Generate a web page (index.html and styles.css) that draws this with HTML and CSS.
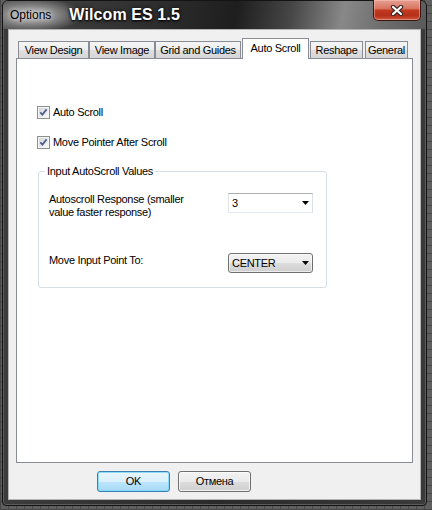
FILE: index.html
```html
<!DOCTYPE html>
<html lang="en">
<head>
<meta charset="utf-8">
<title>Options</title>
<link rel="stylesheet" href="styles.css">
</head>
<body>
<div class="window">
  <div class="titlebar">
    <span class="caption">Options</span>
    <span class="brand">Wilcom ES 1.5</span>
    <button class="close-btn" type="button" aria-label="Close">
      <svg width="14" height="11" viewBox="0 0 14 11">
        <path d="M3 2 L11 9 M11 2 L3 9" stroke="#3a2a28" stroke-width="4.4" stroke-linecap="round" fill="none"/>
        <path d="M3 2 L11 9 M11 2 L3 9" stroke="#ffffff" stroke-width="2.2" stroke-linecap="round" fill="none"/>
      </svg>
    </button>
  </div>

  <div class="client">
    <div class="tab-control">
      <div class="tab-strip">
        <div class="tab tab-design">View Design</div>
        <div class="tab tab-image">View Image</div>
        <div class="tab tab-grid">Grid and Guides</div>
        <div class="tab tab-scroll is-selected">Auto Scroll</div>
        <div class="tab tab-reshape">Reshape</div>
        <div class="tab tab-general">General</div>
      </div>

      <div class="tab-page">
        <label class="check">
          <svg class="check-box" width="13" height="13" viewBox="0 0 13 13">
            <defs>
              <linearGradient id="boxFill" x1="0" y1="0" x2="1" y2="1">
                <stop offset="0" stop-color="#d6d7d9"/>
                <stop offset="1" stop-color="#f7f7f7"/>
              </linearGradient>
            </defs>
            <rect x="0.5" y="0.5" width="12" height="12" fill="#f5f5f5" stroke="#8e8f8f"/>
            <rect x="2" y="2" width="9" height="9" fill="url(#boxFill)"/>
            <path d="M3.3 6.4 L5.4 8.6 L9.6 3.4" stroke="#4a5f8f" stroke-width="1.7" fill="none"/>
          </svg>
          <span>Auto Scroll</span>
        </label>
        <label class="check">
          <svg class="check-box" width="13" height="13" viewBox="0 0 13 13">
            <rect x="0.5" y="0.5" width="12" height="12" fill="#f5f5f5" stroke="#8e8f8f"/>
            <rect x="2" y="2" width="9" height="9" fill="url(#boxFill)"/>
            <path d="M3.3 6.4 L5.4 8.6 L9.6 3.4" stroke="#4a5f8f" stroke-width="1.7" fill="none"/>
          </svg>
          <span>Move Pointer After Scroll</span>
        </label>

        <fieldset class="group">
          <legend>Input AutoScroll Values</legend>
          <div class="group-body">
            <span class="field-label">Autoscroll Response (smaller value faster response)</span>
            <div class="combo combo-edit">
              <span>3</span>
              <svg width="7" height="4" viewBox="0 0 7 4"><path d="M0 0 H7 L3.5 4 Z" fill="#000"/></svg>
            </div>

            <span class="field-label field-label-single">Move Input Point To:</span>
            <div class="combo combo-list">
              <span>CENTER</span>
              <svg width="7" height="4" viewBox="0 0 7 4"><path d="M0 0 H7 L3.5 4 Z" fill="#000"/></svg>
            </div>
          </div>
        </fieldset>
      </div>
    </div>

    <div class="dialog-buttons">
      <button class="btn btn-default" type="button">OK</button>
      <button class="btn" type="button">Отмена</button>
    </div>
  </div>
</div>
</body>
</html>
```

FILE: styles.css
```css
* {
  box-sizing: border-box;
}

html,
body {
  margin: 0;
  height: 510px;
  overflow: hidden;
}

/* desktop behind the dialog: dark gray with a faint grid */
body {
  padding-left: 2px;
  background-color: #5f5f5f;
  background-image:
    repeating-linear-gradient(0deg, #474747 0 1px, transparent 1px 8px),
    repeating-linear-gradient(90deg, #474747 0 1px, transparent 1px 8px);
  font-family: "Liberation Sans", Arial, sans-serif;
  font-size: 11px;
  line-height: 13px;
  letter-spacing: -0.3px;
  color: #000;
}

/* dark glass window frame */
.window {
  width: 425px;
  height: 506px;
  border: 1px solid #141414;
  border-radius: 6px 6px 4px 4px;
  background: linear-gradient(90deg, #3c3c3c, #2a2a2a 50%, #3a3a3a);
  box-shadow: inset 0 0 0 1px #5c5c5c;
  display: flex;
  flex-direction: column;
}

.titlebar {
  flex: none;
  height: 28px;
  display: flex;
  align-items: flex-start;
  padding-left: 7px;
  border-radius: 5px 5px 0 0;
  background:
    radial-gradient(ellipse 50px 17px at 30px 14px, rgba(200, 200, 200, 0.95), rgba(150, 150, 150, 0.55) 65%, rgba(150, 150, 150, 0) 100%),
    linear-gradient(100deg, #5a5a5a 0%, #3a3a3a 18%, #2b2b2b 40%, #1e1e1e 55%, #474747 68%, #888888 80%, #6c6c6c 90%, #5a5a5a 100%);
}

.caption {
  margin-top: 7px;
  font-size: 12px;
  line-height: 14px;
  letter-spacing: 0;
  color: #000;
  text-shadow: 0 0 5px #e6e6e6, 0 0 9px #cfcfcf;
}

.brand {
  margin-left: 18px;
  margin-top: 5px;
  font-size: 16px;
  line-height: 18px;
  font-weight: bold;
  letter-spacing: 0.1px;
  color: #fff;
  text-shadow: 0 1px 2px #000, 0 0 4px rgba(0, 0, 0, 0.8);
}

.close-btn {
  margin-left: auto;
  margin-right: 5px;
  margin-top: -1px;
  width: 48px;
  height: 21px;
  padding: 0;
  border: 1px solid #3b1510;
  border-top: none;
  border-radius: 0 0 5px 5px;
  background: linear-gradient(#e6a193 0%, #d87561 42%, #c2391f 52%, #b5301a 78%, #d0583d 100%);
  box-shadow: inset 0 0 0 1px rgba(255, 205, 195, 0.45);
  display: flex;
  align-items: center;
  justify-content: center;
}

/* dialog client area */
.client {
  flex: none;
  height: 471px;
  margin: 0 5px;
  border: 1px solid #b4b4b4;
  background: #f0f0f0;
}

.tab-control {
  margin: 8px 0 0 7px;
  width: 397px;
}

.tab-strip {
  position: relative;
  z-index: 1;
  display: flex;
  align-items: flex-end;
  height: 20px;
  padding-left: 2px;
}

.tab {
  height: 17px;
  padding-top: 2px;
  border: 1px solid #898c95;
  border-bottom: none;
  text-align: center;
  white-space: nowrap;
  background: linear-gradient(#f5f5f5, #ededed 50%, #dfdfdf 51%, #d6d6d6);
}

.tab.is-selected {
  height: 21px;
  margin-bottom: -1px;
  padding-top: 3px;
  background: #fff;
}

.tab-design { width: 71px; }
.tab-image { width: 66px; }
.tab-grid { width: 86px; }
.tab-scroll { width: 67px; margin-left: 1px; }
.tab-reshape { width: 53px; margin-left: 1px; }
.tab-general { width: 43px; margin-left: 2px; }

.tab-page {
  height: 405px;
  border: 1px solid #898c95;
  background: #fff;
  padding: 47px 0 0 20px;
}

.check {
  display: flex;
  align-items: flex-start;
  gap: 3px;
  height: 13px;
}

.check + .check {
  margin-top: 17px;
}

.check-box {
  flex: none;
}

.group {
  margin: 16px 0 0 1px;
  width: 289px;
  min-width: 0;
  padding: 15px 0 14px 0;
  border: 1px solid #d5dfe5;
  border-radius: 3px;
}

.group legend {
  margin-left: 6px;
  padding: 0 2px;
  line-height: 13px;
}

.group-body {
  display: grid;
  grid-template-columns: 179px 85px;
  row-gap: 34px;
  align-items: start;
  padding: 0 12px 0 10px;
}

.field-label {
  max-width: 150px;
}

.field-label-single {
  padding-top: 1px;
}

.combo {
  height: 20px;
  display: flex;
  align-items: center;
  justify-content: space-between;
  padding: 0 3px 0 3px;
}

.combo-edit {
  background: #fff;
  border: 1px solid;
  border-color: #abadb3 #dbdfe6 #e3e9ef #e2e3ea;
}

.combo-list {
  border: 1px solid #707070;
  border-radius: 3px;
  background: linear-gradient(#f2f2f2, #ebebeb 50%, #dddddd 50%, #cfcfcf);
  box-shadow: inset 0 0 0 1px rgba(255, 255, 255, 0.6);
}

.dialog-buttons {
  display: flex;
  gap: 8px;
  margin-top: 8px;
  padding-left: 88px;
}

.btn {
  width: 73px;
  height: 21px;
  padding: 0;
  border: 1px solid #707070;
  border-radius: 3px;
  font: inherit;
  letter-spacing: inherit;
  color: #000;
  background: linear-gradient(#f2f2f2, #ebebeb 50%, #dddddd 50%, #cfcfcf);
  box-shadow: inset 0 0 0 1px rgba(255, 255, 255, 0.7);
}

.btn-default {
  border-color: #3c7fb1;
  background: linear-gradient(#eaf6fd, #d9f0fc 50%, #bee6fd 50%, #a7d9f5);
  box-shadow: inset 0 0 0 1px rgba(120, 215, 250, 0.8);
}
```
